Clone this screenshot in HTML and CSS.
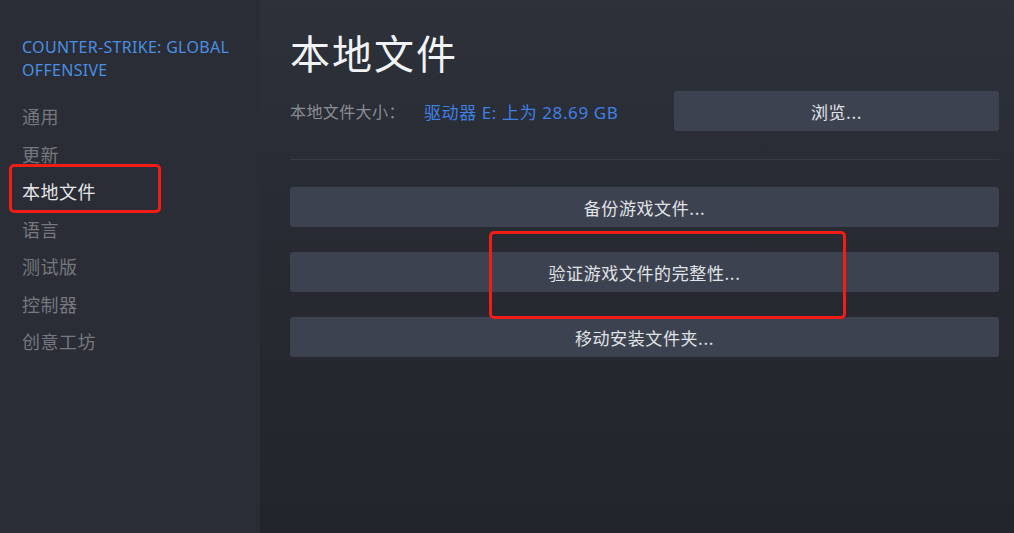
FILE: index.html
```html
<!DOCTYPE html>
<html lang="zh-CN">
<head>
    <meta charset="UTF-8">
    <meta name="viewport" content="width=device-width, initial-scale=1.0">
    <title>本地文件</title>
    <link rel="stylesheet" href="styles.css">
</head>
<body>
    <div class="window">
        <aside class="sidebar">
            <div class="game-title">COUNTER-STRIKE: GLOBAL OFFENSIVE</div>
            <nav class="nav">
                <a class="nav-item">通用</a>
                <a class="nav-item">更新</a>
                <a class="nav-item active">本地文件</a>
                <a class="nav-item">语言</a>
                <a class="nav-item">测试版</a>
                <a class="nav-item">控制器</a>
                <a class="nav-item">创意工坊</a>
            </nav>
        </aside>

        <main class="content">
            <h1>本地文件</h1>
            <div class="size-row">
                <span class="size-label">本地文件大小：</span>
                <span class="size-value">驱动器 E: 上为 28.69 GB</span>
                <button class="btn btn-browse">浏览...</button>
            </div>
            <hr class="divider">
            <div class="actions">
                <button class="btn">备份游戏文件...</button>
                <button class="btn">验证游戏文件的完整性...</button>
                <button class="btn">移动安装文件夹...</button>
            </div>
        </main>

        <div class="mark mark-nav"></div>
        <div class="mark mark-verify"></div>
    </div>
</body>
</html>
```

FILE: styles.css
```css
* {
    box-sizing: border-box;
}

html, body {
    margin: 0;
    padding: 0;
    height: 100%;
}

body {
    font-family: "Noto Sans", "Noto Sans CJK SC", sans-serif;
    background: #262930;
    overflow: hidden;
}

.window {
    position: relative;
    display: grid;
    grid-template-columns: 260px 1fr;
    height: 533px;
}

.sidebar {
    background: #2a2d35;
    padding: 36px 0 0 22px;
}

.game-title {
    color: #4a8fe3;
    font-size: 16px;
    line-height: 23px;
    letter-spacing: 0.3px;
    text-transform: uppercase;
    margin-bottom: 16px;
}

.nav {
    display: flex;
    flex-direction: column;
}

.nav-item {
    font-family: "Noto Sans CJK SC", sans-serif;
    font-size: 18px;
    line-height: 37.5px;
    letter-spacing: 0.5px;
    color: #75787e;
}

.nav-item.active {
    color: #e4e6e8;
}

.content {
    background: linear-gradient(180deg, #2d313a 0%, #262930 55%, #22252c 100%);
    padding: 26px 15px 0 30px;
}

h1 {
    margin: 0;
    font-family: "Noto Sans CJK SC", sans-serif;
    font-weight: 400;
    font-size: 40px;
    line-height: 52px;
    color: #f2f3f4;
    letter-spacing: 2px;
}

.size-row {
    display: flex;
    align-items: center;
    margin-top: 13px;
    font-family: "Noto Sans", "Noto Sans CJK SC", sans-serif;
    font-size: 16px;
}

.size-label {
    color: #8a8d92;
    width: 134px;
    letter-spacing: 0.4px;
}

.size-value {
    color: #3f80e4;
    font-size: 17px;
    letter-spacing: 0.6px;
    flex: 1;
}

.btn {
    display: block;
    width: 100%;
    height: 40px;
    border: none;
    border-radius: 3px;
    background: #3d4250;
    color: #e1e4e7;
    font-family: "Noto Sans CJK SC", sans-serif;
    font-size: 17px;
    letter-spacing: 0.6px;
    cursor: pointer;
}

.btn:hover {
    background: #464c5b;
}

.btn-browse {
    width: 325px;
    flex: none;
}

.divider {
    border: none;
    border-top: 1px solid #363a44;
    margin: 28px 0 27px;
}

.actions {
    display: flex;
    flex-direction: column;
    gap: 25px;
}

/* annotation frames drawn over the screenshot */
.mark {
    position: absolute;
    border: 3px solid #f21d16;
    border-radius: 5px;
    pointer-events: none;
}

.mark-nav {
    left: 9px;
    top: 164px;
    width: 152px;
    height: 49px;
}

.mark-verify {
    left: 489px;
    top: 231px;
    width: 357px;
    height: 88px;
}
```
